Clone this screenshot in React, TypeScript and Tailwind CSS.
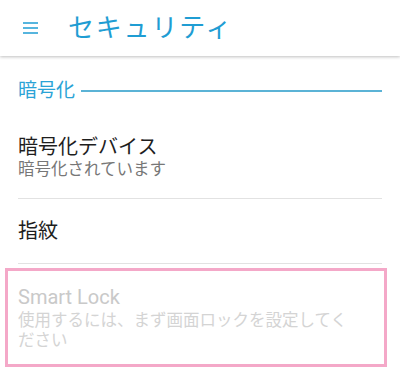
import React from "react";

const jp = "font-['Roboto','Noto_Sans_CJK_JP',sans-serif]";

export default function App() {
  return (
    <div className={`w-[400px] h-[391px] bg-white overflow-hidden ${jp}`}>
      <header className="h-[56px] flex items-center bg-white shadow-[0_1px_3px_rgba(0,0,0,0.25)] relative z-10">
        <svg className="ml-[23px] w-[16px] h-[12px]" viewBox="0 0 16 12" fill="none">
          <path d="M0 1h15M0 6h15M0 11h15" stroke="#1f9dd3" strokeWidth="1.6" />
        </svg>
        <h1 className="ml-[29px] text-[26px] leading-[30px] text-[#1f9dd3] tracking-[1.8px]">セキュリティ</h1>
      </header>

      <div className="px-[18px]">
        <div className="pt-[23px] pb-[15px] flex items-center gap-[6px]">
          <span className="text-[19px] leading-[24px] text-[#2aa3d6]">暗号化</span>
          <div className="flex-1 h-[2px] bg-[#5bb3d6]" />
        </div>

        <div className="pt-[17px] pb-[17px] border-b border-[#e2e2e2]">
          <div className="text-[20px] leading-[24px] text-[#1e1e1e]">暗号化デバイス</div>
          <div className="text-[16.5px] leading-[22px] text-[#777777]">暗号化されています</div>
        </div>

        <div className="pt-[20px] pb-[20px] border-b border-[#e2e2e2]">
          <div className="text-[20px] leading-[24px] text-[#1e1e1e]">指紋</div>
        </div>
      </div>

      <div className="mt-[4px] ml-[5px] w-[382px] h-[99px] border-[3px] border-[#f4a8c8] pl-[10px] pt-[14px]">
        <div className="text-[20px] leading-[24px] text-[#c9c9c9]">Smart Lock</div>
        <div className="w-[345px] pt-[2px] text-[16.5px] leading-[20px] text-[#d4d4d4]">
          使用するには、まず画面ロックを設定してください
        </div>
      </div>
    </div>
  );
}
